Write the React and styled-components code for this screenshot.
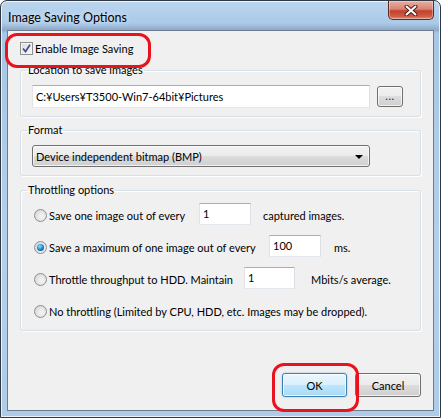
import React, { useState } from 'react';
import styled, { createGlobalStyle, css } from 'styled-components';

const GlobalStyle = createGlobalStyle`
  html, body {
    margin: 0;
    padding: 0;
    background: #ffffff;
  }
  * {
    box-sizing: border-box;
  }
`;

const uiFont = `Lato, "Liberation Sans", sans-serif`;

// aero glass window frame
const Window = styled.div`
  width: 441px;
  height: 418px;
  display: flex;
  flex-direction: column;
  padding: 0 6px 6px 6px;
  border: 1px solid #2f3843;
  border-radius: 7px 7px 0 0;
  background: linear-gradient(
    to bottom,
    #bcd5ee 0px,
    #aacae8 22px,
    #9fbcdc 25px,
    #8ea8c6 29px,
    #a8c6e5 32px,
    #b4cfea 60%,
    #aecbe8 100%
  );
  box-shadow: inset 0 0 0 1px rgba(255, 255, 255, 0.75);
  font-family: ${uiFont};
  font-size: 11px;
  color: #000;
`;

const TitleBar = styled.div`
  height: 29px;
  flex: none;
  display: flex;
  justify-content: space-between;
  align-items: flex-start;
`;

const Title = styled.div`
  padding: 9px 0 0 1px;
  font-size: 12.5px;
  line-height: 15px;
  color: #000;
  text-shadow: 0 0 6px rgba(255, 255, 255, 0.9);
`;

const CloseButton = styled.div`
  width: 46px;
  height: 19px;
  display: flex;
  align-items: center;
  justify-content: center;
  border: 1px solid #5b2a26;
  border-top: none;
  border-radius: 0 0 5px 5px;
  background: linear-gradient(to bottom, #e9ada2 0%, #d98473 45%, #c2402e 55%, #d05c45 85%, #e08e75 100%);
  box-shadow: inset 0 0 0 1px rgba(255, 255, 255, 0.35);
`;

const Client = styled.div`
  flex: 1;
  display: flex;
  flex-direction: column;
  position: relative;
  border: 1px solid #6d7c8f;
  background: #f0f0f0;
  padding: 0 12px 13px 12px;
`;

// red annotation ring over a control
const Marked = styled.div`
  position: relative;
  display: flex;
  margin-top: ${(p) => p.$mt || 0}px;
  &::after {
    content: "";
    position: absolute;
    pointer-events: none;
    left: ${(p) => p.$left}px;
    top: ${(p) => p.$top}px;
    width: ${(p) => p.$w}px;
    height: ${(p) => p.$h}px;
    border: 3px solid #e8131f;
    border-radius: 12px;
  }
`;

const CheckRow = styled.label`
  display: flex;
  align-items: center;
  gap: 2px;
  height: 13px;
  line-height: 13px;
`;

const CheckBox = styled.span`
  width: 13px;
  height: 13px;
  flex: none;
  display: flex;
  align-items: center;
  justify-content: center;
  border: 1px solid #8e8f8f;
  background: linear-gradient(135deg, #dcdcdc 0%, #f6f6f6 100%);
  box-shadow: inset 0 0 0 1px #f4f4f4;
`;

const Group = styled.fieldset`
  margin: ${(p) => p.$mt}px 0 0 0;
  padding: 0 6px;
  min-width: 0;
  border: 1px solid #d5dfe5;
  border-radius: 3px;
  box-shadow: inset 1px 1px 0 #ffffff, 1px 1px 0 #ffffff;
`;

const Legend = styled.legend`
  padding: 0 1px;
  line-height: 14px;
  font-size: 11px;
`;

const GroupBody = styled.div`
  padding: ${(p) => p.$pad};
  display: flex;
  flex-direction: ${(p) => (p.$column ? 'column' : 'row')};
  gap: ${(p) => p.$gap || 0}px;
  align-items: ${(p) => (p.$column ? 'stretch' : 'center')};
`;

const textBoxLook = css`
  border: 1px solid #abadb3;
  border-left-color: #e2e3ea;
  border-right-color: #dbdfe6;
  border-bottom-color: #e3e9ef;
  background: #ffffff;
  font-family: ${uiFont};
  font-size: 11px;
  color: #000;
  outline: none;
`;

const TextBox = styled.div`
  ${textBoxLook};
  width: ${(p) => p.$w}px;
  height: ${(p) => p.$h || 22}px;
  flex: none;
  padding: ${(p) => p.$pt || 3}px 0 0 3px;
  line-height: 14px;
  white-space: nowrap;
`;

const buttonLook = css`
  border: 1px solid #707070;
  border-radius: 3px;
  background: linear-gradient(to bottom, #f2f2f2 0%, #ebebeb 49%, #dddddd 50%, #cfcfcf 100%);
  box-shadow: inset 0 0 0 1px rgba(255, 255, 255, 0.7);
`;

const BrowseButton = styled.div`
  ${buttonLook};
  width: 26px;
  height: 21px;
  flex: none;
  display: flex;
  align-items: center;
  justify-content: center;
  font-size: 11px;
  letter-spacing: 0.5px;
  color: #1d1a6e;
  padding-bottom: 2px;
`;

const Select = styled.div`
  ${buttonLook};
  width: 338px;
  height: 22px;
  display: flex;
  align-items: center;
  justify-content: space-between;
  padding: 0 6px 0 3px;
`;

const Arrow = styled.span`
  width: 0;
  height: 0;
  border-left: 4px solid transparent;
  border-right: 4px solid transparent;
  border-top: 4px solid #000;
  margin-top: 1px;
`;

const OptionRow = styled.div`
  height: 22px;
  display: flex;
  align-items: center;
`;

const Radio = styled.span`
  width: 13px;
  height: 13px;
  flex: none;
  border-radius: 50%;
  border: 1px solid #8e8f8f;
  background: radial-gradient(circle at 60% 60%, #f5f5f5 0%, #e2e2e2 55%, #cfcfcf 100%);
  display: flex;
  align-items: center;
  justify-content: center;
  margin-right: 2px;
  margin-top: ${(p) => p.$dy || 0}px;
  &::after {
    content: "";
    display: ${(p) => (p.$checked ? 'block' : 'none')};
    width: 7px;
    height: 7px;
    border-radius: 50%;
    background: radial-gradient(circle at 40% 35%, #9fe3ff 0%, #3ba0de 35%, #175f9e 70%, #0d3f72 100%);
  }
`;

const OptionText = styled.span`
  width: ${(p) => (p.$w ? `${p.$w}px` : 'auto')};
  flex: none;
  white-space: nowrap;
  margin-top: 2px;
`;

const Suffix = styled.span`
  margin-left: ${(p) => p.$ml}px;
  white-space: nowrap;
  margin-top: 2px;
`;

const ButtonRow = styled.div`
  margin-top: auto;
  display: flex;
  justify-content: flex-end;
  gap: 8px;
`;

const DialogButton = styled.div`
  ${buttonLook};
  width: ${(p) => p.$w}px;
  height: 24px;
  display: flex;
  align-items: center;
  justify-content: center;
  ${(p) =>
    p.$default &&
    css`
      border-color: #3c7fb1;
      background: linear-gradient(to bottom, #eaf6fd 0%, #d9f0fc 49%, #bee6fd 50%, #a7d9f5 100%);
      box-shadow: inset 0 0 0 1px rgba(255, 255, 255, 0.8), 0 0 2px rgba(60, 160, 230, 0.6);
    `}
`;

const options = [
  { text: 'Save one image out of every', w: 150, value: '1', suffix: 'captured images.', ml: 12, inW: 52 },
  { text: 'Save a maximum of one image out of every', w: 220, value: '100', suffix: 'ms.', ml: 13, inW: 52 },
  { text: 'Throttle throughput to HDD. Maintain', w: 195, value: '1', suffix: 'Mbits/s average.', ml: 16, inW: 51 },
  { text: 'No throttling (Limited by CPU, HDD, etc. Images may be dropped).' },
];

function CloseGlyph() {
  return (
    <svg width="14" height="11" viewBox="0 0 14 11">
      <path d="M2.5 1.5 L11.5 9.5 M11.5 1.5 L2.5 9.5" stroke="#4a2020" strokeWidth="4" strokeLinecap="round" />
      <path d="M2.5 1.5 L11.5 9.5 M11.5 1.5 L2.5 9.5" stroke="#ffffff" strokeWidth="2" strokeLinecap="round" />
    </svg>
  );
}

function CheckMark() {
  return (
    <svg width="9" height="9" viewBox="0 0 9 9">
      <path d="M1 4.5 L3.5 7.5 L8 0.8" stroke="#3d4f8f" strokeWidth="1.7" fill="none" />
    </svg>
  );
}

export default function App() {
  const [mode] = useState(1);

  return (
    <>
      <GlobalStyle />
      <Window>
        <TitleBar>
          <Title>Image Saving Options</Title>
          <CloseButton>
            <CloseGlyph />
          </CloseButton>
        </TitleBar>
        <Client>
          <Marked $mt={11} $left={-15} $top={-9} $w={140} $h={29}>
            <CheckRow>
              <CheckBox>
                <CheckMark />
              </CheckBox>
              Enable Image Saving
            </CheckRow>
          </Marked>

          <Group $mt={8}>
            <Legend>Location to save images</Legend>
            <GroupBody $pad="8px 5px 8px 5px" $gap={7}>
              <TextBox $w={338} $h={23} $pt={4}>C:¥Users¥T3500-Win7-64bit¥Pictures</TextBox>
              <BrowseButton>...</BrowseButton>
            </GroupBody>
          </Group>

          <Group $mt={6}>
            <Legend>Format</Legend>
            <GroupBody $pad="8px 5px 8px 5px">
              <Select>
                <span>Device independent bitmap (BMP)</span>
                <Arrow />
              </Select>
            </GroupBody>
          </Group>

          <Group $mt={7}>
            <Legend>Throttling options</Legend>
            <GroupBody $pad="6px 5px 9px 7px" $column $gap={10}>
              {options.map((o, i) => (
                <OptionRow key={i}>
                  <Radio $checked={i === mode} $dy={i === 0 ? 3 : 2} />
                  <OptionText $w={o.w}>{o.text}</OptionText>
                  {o.value && (
                    <>
                      <TextBox $w={o.inW}>{o.value}</TextBox>
                      <Suffix $ml={o.ml}>{o.suffix}</Suffix>
                    </>
                  )}
                </OptionRow>
              ))}
            </GroupBody>
          </Group>

          <ButtonRow>
            <Marked $left={-10} $top={-10} $w={81} $h={43}>
              <DialogButton $w={65} $default>OK</DialogButton>
            </Marked>
            <DialogButton $w={66}>Cancel</DialogButton>
          </ButtonRow>
        </Client>
      </Window>
    </>
  );
}
